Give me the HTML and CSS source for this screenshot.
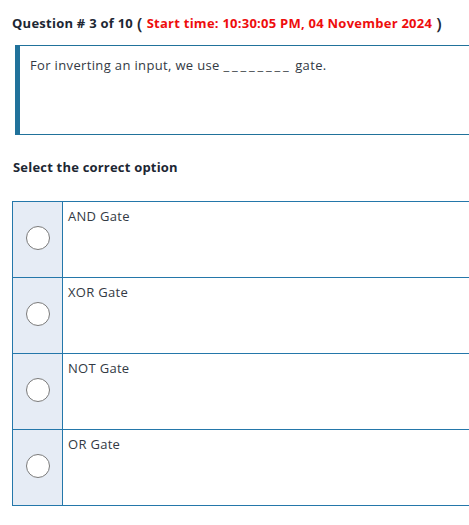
FILE: index.html
```html
<!DOCTYPE html>
<html>
<head>
<meta charset="utf-8">
<link rel="stylesheet" href="styles.css">
</head>
<body>
<div class="page">
  <div class="header">
    <span class="q-num">Question # 3 of 10</span>
    <span class="paren">(</span>
    <span class="start">Start time: 10:30:05 PM, 04 November 2024</span>
    <span class="paren">)</span>
  </div>
  <div class="question-box">
    <p class="question-text">For inverting an input, we use <span class="blank">________</span> gate.</p>
  </div>
  <div class="select-label">Select the correct option</div>
  <div class="options">
    <div class="option">
      <div class="radio-cell"><span class="radio"></span></div>
      <div class="option-text">AND Gate</div>
    </div>
    <div class="option">
      <div class="radio-cell"><span class="radio"></span></div>
      <div class="option-text">XOR Gate</div>
    </div>
    <div class="option">
      <div class="radio-cell"><span class="radio"></span></div>
      <div class="option-text">NOT Gate</div>
    </div>
    <div class="option">
      <div class="radio-cell"><span class="radio"></span></div>
      <div class="option-text">OR Gate</div>
    </div>
  </div>
</div>
</body>
</html>
```
FILE: styles.css
```css
html, body {
  margin: 0;
  padding: 0;
  background: #fff;
  overflow: hidden;
}
.page {
  font-family: "Open Sans", "DejaVu Sans", sans-serif;
  color: #1d2733;
  padding: 12px 0 0 0;
}
.header {
  margin-left: 12px;
  height: 22px;
  display: flex;
  align-items: center;
  gap: 4px;
  font-size: 13px;
  font-weight: 700;
  letter-spacing: 0.25px;
  white-space: nowrap;
}
.q-num {
  color: #1d2733;
}
.paren {
  font-size: 17px;
  font-weight: 600;
  color: #1d2733;
}
.start {
  color: #ee0d0d;
}
.question-box {
  margin: 11px 0 0 15px;
  height: 88px;
  border-left: 5px solid #21729b;
  border-top: 1px solid #21729b;
  border-bottom: 1px solid #21729b;
  box-sizing: content-box;
}
.question-text {
  margin: 0;
  padding: 10px 0 0 10px;
  font-size: 13px;
  letter-spacing: 0.35px;
  color: #333a44;
}
.blank {
  letter-spacing: 2.8px;
}
.select-label {
  margin: 23px 0 0 13px;
  font-size: 13px;
  line-height: 18px;
  font-weight: 700;
  letter-spacing: 0.2px;
  color: #1d2733;
}
.options {
  margin: 25px 0 0 12px;
  border-top: 1px solid #2477aa;
}
.option {
  display: flex;
  height: 75px;
  border-bottom: 1px solid #2477aa;
  border-left: 1px solid #2477aa;
}
.radio-cell {
  width: 49px;
  padding-bottom: 3px;
  background: #e6ecf5;
  border-right: 1px solid #2477aa;
  display: flex;
  align-items: center;
  justify-content: center;
}
.radio {
  display: block;
  width: 22px;
  height: 22px;
  border-radius: 50%;
  border: 1.5px solid #7a7a7a;
  background: #fff;
}
.option-text {
  padding: 5px 0 0 5px;
  font-size: 13px;
  letter-spacing: 0.3px;
  color: #333a44;
}
```
